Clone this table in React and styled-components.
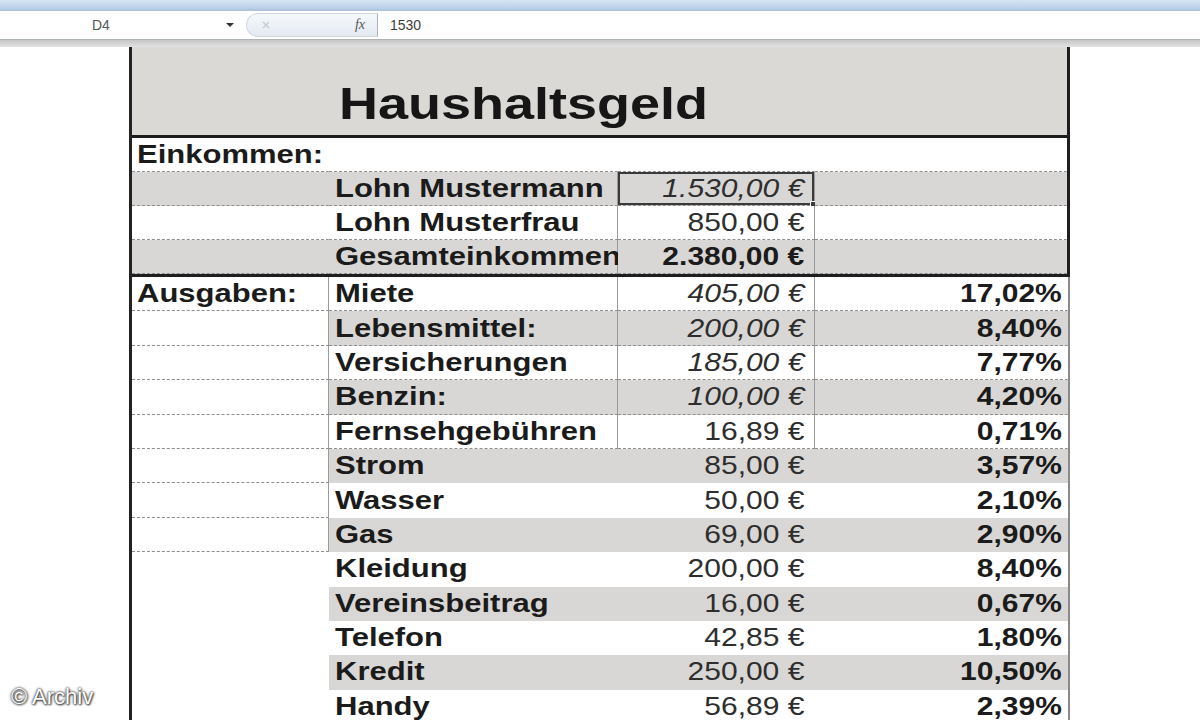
import React from 'react';
import styled, { createGlobalStyle } from 'styled-components';

const GlobalStyle = createGlobalStyle`
  html, body {
    margin: 0;
    padding: 0;
    background: #ffffff;
    overflow: hidden;
  }
  body {
    font-family: "Liberation Sans", Arial, sans-serif;
  }
`;

// the screenshot is stretched sideways, so text gets widened too
const STRETCH = 1.2;
const LABEL_STRETCH = 1.24;

const Page = styled.div`
  position: relative;
  width: 1200px;
  height: 720px;
  overflow: hidden;
  background: #fff;
`;

const Ribbon = styled.div`
  height: 11px;
  background: linear-gradient(#d6e4f2, #bcd2e8 70%, #a9c1da);
`;

const FormulaBar = styled.div`
  display: flex;
  align-items: center;
  height: 28px;
  background: #fff;
  border-bottom: 1px solid #aeb3b9;
  font-size: 14px;
  color: #3c3c3c;
`;

const NameBox = styled.div`
  display: flex;
  align-items: center;
  width: 246px;
  padding-left: 92px;
  box-sizing: border-box;
`;

const NameText = styled.span`
  flex: 1;
  color: #555;
`;

const DropArrow = styled.span`
  width: 0;
  height: 0;
  margin-right: 12px;
  border-left: 4px solid transparent;
  border-right: 4px solid transparent;
  border-top: 4px solid #333;
`;

const FxPill = styled.div`
  display: flex;
  align-items: center;
  justify-content: space-between;
  width: 132px;
  height: 24px;
  padding: 0 12px 0 14px;
  box-sizing: border-box;
  border-radius: 12px 0 0 12px;
  background: linear-gradient(#f6f9fc, #e2e9f1);
  border: 1px solid #cfd7e1;
  border-right: 1px solid #aab2bd;
`;

const Fx = styled.span`
  font-family: "Liberation Serif", serif;
  font-style: italic;
  font-size: 14px;
  color: #555;
`;

const FormulaText = styled.span`
  padding-left: 12px;
`;

const Band = styled.div`
  height: 7px;
  background: linear-gradient(#c6c6c6, #e2e2e2);
`;

const Sheet = styled.div`
  padding-left: 129px;
`;

const Table = styled.div`
  width: 941px;
  border-left: 3px solid #222;
  box-sizing: border-box;
`;

const Block = styled.div`
  border-right: ${p => (p.$strong ? '3px solid #1e1e1e' : '2px solid #8a8a8a')};
  border-bottom: ${p => (p.$strong ? '3px solid #1e1e1e' : 'none')};
`;

const TitleRow = styled.div`
  display: flex;
  align-items: flex-end;
  height: 91px;
  box-sizing: border-box;
  padding: 0 0 9px 207px;
  background: #dbd9d6;
  border-bottom: 3px solid #1c1c1c;
`;

const Title = styled.h1`
  margin: 0;
  font-size: 45px;
  line-height: 1;
  font-weight: 700;
  color: #161616;
  transform: scaleX(${STRETCH});
  transform-origin: left center;
`;

const Row = styled.div`
  display: grid;
  grid-template-columns: 197px 289px 197px 1fr;
  height: ${p => p.$h}px;
`;

const Cell = styled.div`
  position: relative;
  display: flex;
  align-items: center;
  justify-content: ${p => (p.$right ? 'flex-end' : 'flex-start')};
  padding: ${p => (p.$right ? `0 ${p.$pad}px 0 0` : `0 0 0 ${p.$pad}px`)};
  box-sizing: border-box;
  background: ${p => (p.$shade ? '#d9d7d5' : '#ffffff')};
  border-bottom: 1px dashed ${p => (p.$dashed ? '#8e8e8e' : 'transparent')};
  border-right: 1px solid ${p => (p.$line ? '#9a9a9a' : 'transparent')};
  box-shadow: ${p => (p.$selected ? 'inset 0 0 0 2px #3a3a3a' : 'none')};

  ${p =>
    p.$selected &&
    `&::after {
      content: '';
      position: absolute;
      right: -3px;
      bottom: -3px;
      width: 5px;
      height: 5px;
      background: #3a3a3a;
      border: 1px solid #fff;
    }`}
`;

const Txt = styled.span`
  display: inline-block;
  white-space: nowrap;
  font-size: 25px;
  line-height: 1;
  font-weight: ${p => (p.$bold ? 700 : 400)};
  font-style: ${p => (p.$italic ? 'italic' : 'normal')};
  color: ${p => (p.$bold ? '#1b1b1b' : '#2e2e2e')};
  transform: scaleX(${p => (p.$label ? LABEL_STRETCH : STRETCH)});
  transform-origin: ${p => (p.$right ? 'right' : 'left')} center;
`;

const Watermark = styled.div`
  position: absolute;
  left: 11px;
  bottom: 10px;
  font-size: 22px;
  color: #fff;
  text-shadow: 0 0 2px #333, 0 0 3px #555, 1px 1px 2px #444;
`;

const income = [
  { a: 'Einkommen:' },
  { b: 'Lohn Mustermann', c: '1.530,00 €', italic: true, shade: true, selected: true },
  { b: 'Lohn Musterfrau', c: '850,00 €' },
  { b: 'Gesamteinkommen', c: '2.380,00 €', bold: true, shade: true },
];

const expenses = [
  { a: 'Ausgaben:', b: 'Miete', c: '405,00 €', d: '17,02%', italic: true },
  { b: 'Lebensmittel:', c: '200,00 €', d: '8,40%', italic: true, shade: true },
  { b: 'Versicherungen', c: '185,00 €', d: '7,77%', italic: true },
  { b: 'Benzin:', c: '100,00 €', d: '4,20%', italic: true, shade: true },
  { b: 'Fernsehgebühren', c: '16,89 €', d: '0,71%' },
  { b: 'Strom', c: '85,00 €', d: '3,57%', shade: true },
  { b: 'Wasser', c: '50,00 €', d: '2,10%' },
  { b: 'Gas', c: '69,00 €', d: '2,90%', shade: true },
  { b: 'Kleidung', c: '200,00 €', d: '8,40%' },
  { b: 'Vereinsbeitrag', c: '16,00 €', d: '0,67%', shade: true },
  { b: 'Telefon', c: '42,85 €', d: '1,80%' },
  { b: 'Kredit', c: '250,00 €', d: '10,50%', shade: true },
  { b: 'Handy', c: '56,89 €', d: '2,39%' },
];

const IncomeRow = ({ r }) => (
  <Row $h={34}>
    <Cell $pad={5} $shade={r.shade} $dashed>
      {r.a && <Txt $bold $label>{r.a}</Txt>}
    </Cell>
    <Cell $pad={6} $shade={r.shade} $dashed $line={!!r.c}>
      {r.b && <Txt $bold $label>{r.b}</Txt>}
    </Cell>
    <Cell $right $pad={10} $shade={r.shade} $dashed $line={!!r.c} $selected={r.selected}>
      {r.c && (
        <Txt $right $bold={r.bold} $italic={r.italic}>
          {r.c}
        </Txt>
      )}
    </Cell>
    <Cell $right $pad={5} $shade={r.shade} $dashed />
  </Row>
);

const ExpenseRow = ({ r, i }) => {
  const boxedA = i < 8;
  const grid = i < 5;
  return (
    <Row $h={34.4}>
      <Cell $pad={5} $dashed={boxedA} $line={boxedA}>
        {r.a && <Txt $bold $label>{r.a}</Txt>}
      </Cell>
      <Cell $pad={6} $shade={r.shade} $dashed={grid} $line={grid}>
        <Txt $bold $label>{r.b}</Txt>
      </Cell>
      <Cell $right $pad={10} $shade={r.shade} $dashed={grid} $line={grid}>
        <Txt $right $italic={r.italic}>
          {r.c}
        </Txt>
      </Cell>
      <Cell $right $pad={5} $shade={r.shade} $dashed={grid}>
        <Txt $right $bold>
          {r.d}
        </Txt>
      </Cell>
    </Row>
  );
};

const App = () => (
  <Page>
    <GlobalStyle />
    <Ribbon />
    <FormulaBar>
      <NameBox>
        <NameText>D4</NameText>
        <DropArrow />
      </NameBox>
      <FxPill>
        <svg width="10" height="10" viewBox="0 0 10 10">
          <path d="M2 2 L8 8 M8 2 L2 8" stroke="#c4cbd3" strokeWidth="1.4" />
        </svg>
        <Fx>fx</Fx>
      </FxPill>
      <FormulaText>1530</FormulaText>
    </FormulaBar>
    <Band />
    <Sheet>
      <Table>
        <Block $strong>
          <TitleRow>
            <Title>Haushaltsgeld</Title>
          </TitleRow>
          {income.map((r, i) => (
            <IncomeRow key={i} r={r} />
          ))}
        </Block>
        <Block>
          {expenses.map((r, i) => (
            <ExpenseRow key={i} r={r} i={i} />
          ))}
        </Block>
      </Table>
    </Sheet>
    <Watermark>© Archiv</Watermark>
  </Page>
);

export default App;
